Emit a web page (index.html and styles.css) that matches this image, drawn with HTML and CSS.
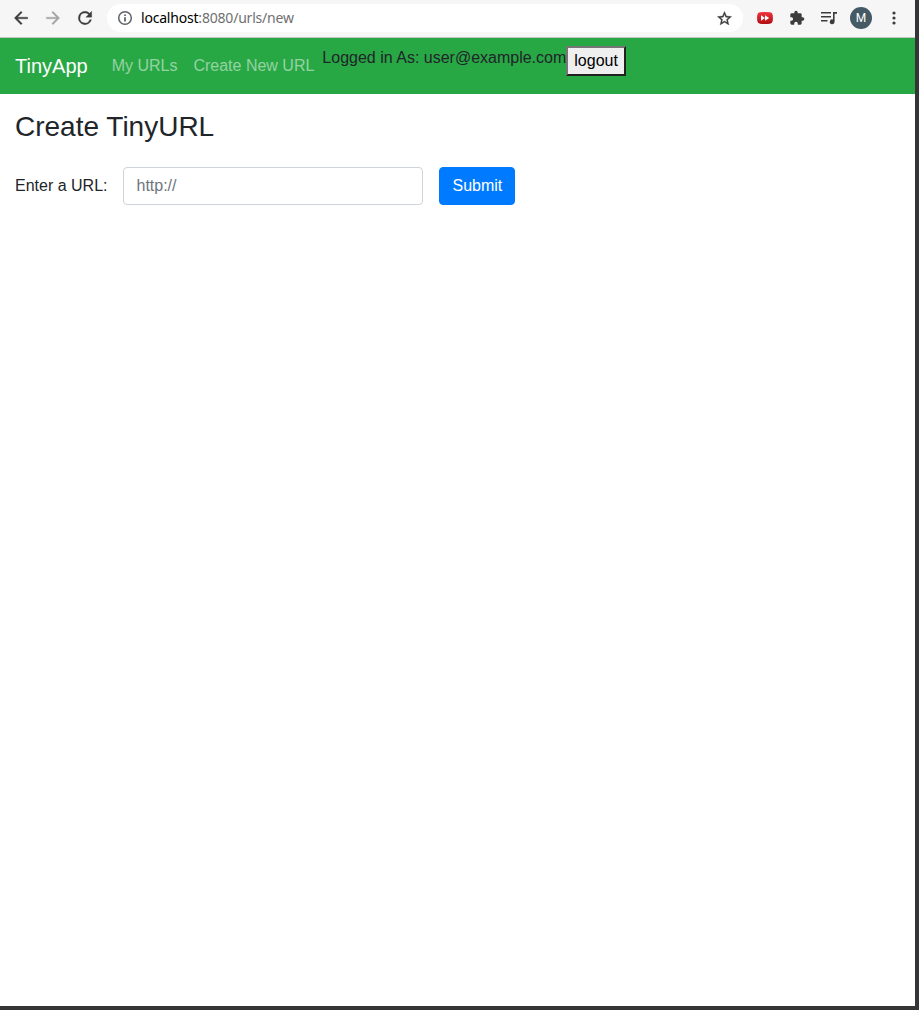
FILE: index.html
```
<!DOCTYPE html>
<html lang="en">
<head>
<meta charset="utf-8">
<title>TinyApp</title>
<link rel="stylesheet" href="styles.css">
</head>
<body>
<div class="window">
  <header class="toolbar">
    <div class="nav-buttons">
      <svg class="icon" viewBox="0 0 24 24"><path d="M20 11H7.83l5.59-5.59L12 4l-8 8 8 8 1.41-1.41L7.83 13H20z"/></svg>
      <svg class="icon icon-disabled" viewBox="0 0 24 24"><path d="M12 4l-1.41 1.41L16.17 11H4v2h12.17l-5.58 5.59L12 20l8-8z"/></svg>
      <svg class="icon" viewBox="0 0 24 24"><path d="M17.65 6.35A7.96 7.96 0 0 0 12 4a8 8 0 1 0 7.73 10h-2.08A6 6 0 1 1 12 6c1.66 0 3.14.69 4.22 1.78L13 11h7V4z"/></svg>
    </div>
    <div class="address">
      <svg class="info" viewBox="0 0 16 16"><circle class="ring" cx="8" cy="8" r="6.300"/><path d="M7.100 7.200h1.800v4.300H7.100zM7.100 4.400h1.800v1.700H7.100z"/></svg>
      <span class="url"><span class="host">localhost</span><span class="path">:8080/urls/new</span></span>
      <svg class="star" viewBox="0 0 24 24"><path d="M22 9.24l-7.19-.62L12 2 9.190 8.630 2 9.240l5.460 4.730L5.820 21 12 17.270 18.180 21l-1.630-7.030zM12 15.400l-3.760 2.270 1-4.280-3.320-2.880 4.380-.38L12 6.100l1.710 4.040 4.380.38-3.320 2.880 1 4.280z"/></svg>
    </div>
    <div class="extensions">
      <svg class="video" viewBox="0 0 16 12">
        <defs><linearGradient id="red" x1="0" y1="0" x2="0" y2="1"><stop offset="0" stop-color="#f0353b"/><stop offset="1" stop-color="#b00d14"/></linearGradient></defs>
        <path fill="url(#red)" d="M3 .3Q8-.3 13 .3 15.500.600 15.700 3q.4 3 0 6-.2 2.400-2.700 2.700-5 .6-10 0Q.500 11.400.300 9q-.4-3 0-6Q.500.600 3 .3z"/>
        <path fill="#fff" d="M4 3.200L8 6 4 8.800zM8 3.200L12.200 6 8 8.800z"/>
      </svg>
      <svg class="puzzle" viewBox="0 0 24 24"><path d="M20.500 11H19V7a2 2 0 0 0-2-2h-4V3.500a2.500 2.500 0 0 0-5 0V5H4a2 2 0 0 0-2 2v3.800h1.500a2.700 2.700 0 0 1 0 5.400H2V20a2 2 0 0 0 2 2h3.800v-1.500a2.700 2.700 0 0 1 5.400 0V22H17a2 2 0 0 0 2-2v-4h1.500a2.500 2.500 0 0 0 0-5z"/></svg>
      <svg class="queue" viewBox="0 0 16 14"><path d="M0 1h10v1.600H0zM0 5h10v1.600H0zM0 9h6.500v1.600H0zM12 1h4v1.700h-2.400v8a2.400 2.400 0 1 1-1.600-2.200z"/></svg>
      <span class="avatar">M</span>
      <svg class="dots" viewBox="0 0 4 14"><circle cx="2" cy="2" r="1.600"/><circle cx="2" cy="7" r="1.600"/><circle cx="2" cy="12" r="1.600"/></svg>
    </div>
  </header>
  <nav class="navbar">
    <a class="brand">TinyApp</a>
    <a class="nav-link">My URLs</a>
    <a class="nav-link">Create New URL</a>
    <div class="session">Logged in As: user@example.com<button class="logout">logout</button></div>
  </nav>
  <main class="content">
    <h3 class="title">Create TinyURL</h3>
    <form class="url-form">
      <label class="label" for="longURL">Enter a URL:</label>
      <input class="input" id="longURL" type="text" placeholder="http://">
      <button class="submit" type="button">Submit</button>
    </form>
  </main>
</div>
</body>
</html>
```
FILE: styles.css
```
* { box-sizing: border-box; }
body {
  margin: 0;
  height: 1010px;
  overflow: hidden;
  background: #343536;
  font: 16px/24px "Liberation Sans", Arial, sans-serif;
  color: #212529;
}
.window { width: 915px; height: 1006px; background: #fff; }
svg { display: block; flex: none; fill: #3c3c3c; }
.toolbar {
  display: flex;
  height: 38px;
  padding: 4px 18px 5px 11px;
  background: #f6f6f6;
  border-bottom: 1px solid #c4c6c4;
}
.nav-buttons { display: flex; gap: 12px; height: 28px; align-items: center; }
.icon { width: 20px; height: 20px; stroke: #3c3c3c; stroke-width: .4; }
.icon-disabled { fill: #a4a4a4; stroke: #a4a4a4; }
.address {
  display: flex;
  align-items: center;
  width: 636px;
  height: 28px;
  margin-left: 12px;
  padding: 0 10px;
  border-radius: 14px;
  background: #fff;
}
.info { width: 16px; height: 16px; fill: #5f6368; }
.ring { fill: none; stroke: #5f6368; stroke-width: 1.5; }
.url {
  margin-left: 8px;
  font: 14px/20px "Noto Sans", "Open Sans", sans-serif;
  letter-spacing: -.2px;
  white-space: nowrap;
}
.host { color: #000; }
.path { color: #707070; }
.star { width: 17px; height: 17px; margin-left: auto; stroke: #3c3c3c; stroke-width: .5; }
.extensions { display: flex; align-items: center; height: 28px; margin-left: 14px; }
.video { width: 16px; height: 12px; }
.puzzle { width: 16px; height: 16px; margin-left: 16px; }
.queue { width: 16px; height: 14px; margin-left: 16px; }
.avatar {
  width: 22px;
  height: 22px;
  margin-left: 13px;
  border-radius: 50%;
  background: #455a64;
  color: #fff;
  font: 12px/22px Roboto, sans-serif;
  text-align: center;
}
.dots { width: 4px; height: 14px; margin-left: 19.5px; }
.navbar {
  display: flex;
  height: 56px;
  padding: 8px 15px;
  background: #28a745;
}
.brand { margin-right: 16px; font-size: 20px; line-height: 40px; color: #fff; }
.nav-link { padding: 0 8px; line-height: 40px; color: rgba(255, 255, 255, .5); }
.session { display: flex; align-items: flex-start; }
.logout {
  height: 30px;
  padding: 1px 6px;
  border: 2px solid;
  border-color: #767676 #212121 #212121 #767676;
  border-radius: 0;
  background: #efefef;
  color: #000;
  font: inherit;
}
.content { padding: 16px 15px; }
.title { margin: 0 0 24px; font-size: 28px; font-weight: 500; line-height: 33px; }
.url-form { display: flex; align-items: center; gap: 16px; }
.input {
  width: 300px;
  height: 38px;
  padding: 6px 12px;
  border: 1px solid #ced4da;
  border-radius: 4px;
  background: #fff;
  font: inherit;
}
.input::placeholder { color: #6c757d; opacity: 1; }
.submit {
  height: 38px;
  padding: 6px 12px;
  border: 1px solid #007bff;
  border-radius: 4px;
  background: #007bff;
  color: #fff;
  font: inherit;
}
```
